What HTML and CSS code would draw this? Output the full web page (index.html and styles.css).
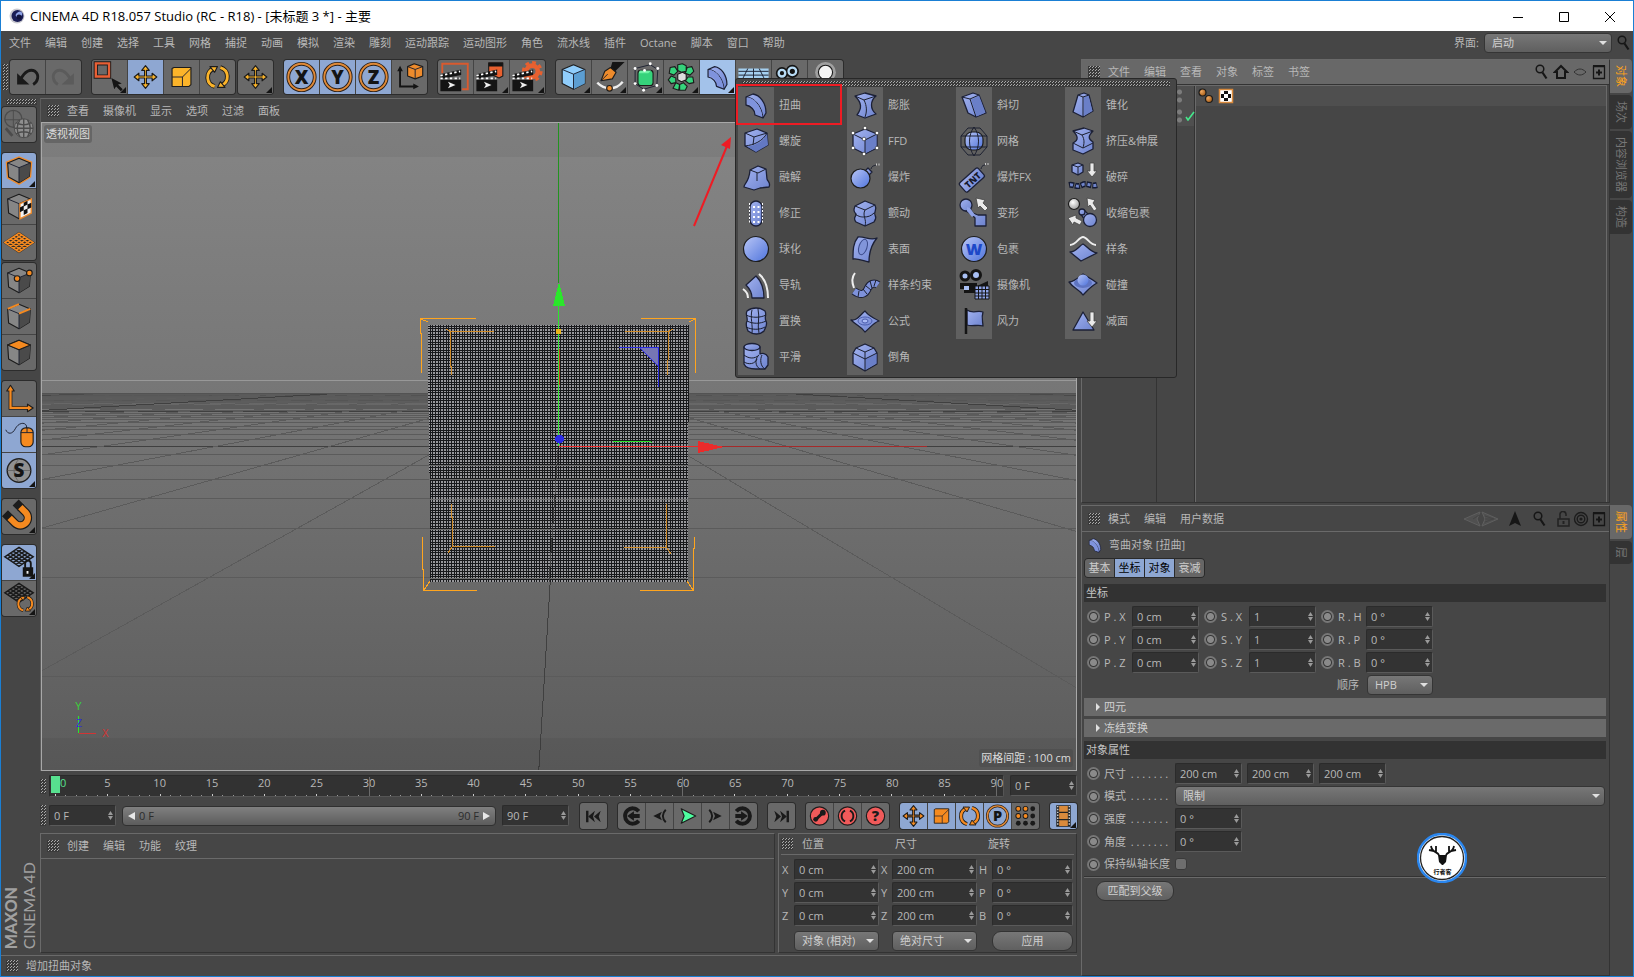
FILE: index.html
```html
<!DOCTYPE html>
<html lang="zh-CN">
<head>
<meta charset="utf-8">
<title>CINEMA 4D R18.057 Studio</title>
<link rel="stylesheet" href="styles.css">
</head>
<body>
<svg class="defs" width="0" height="0" aria-hidden="true">
<defs>
<linearGradient id="gb" x1="0" y1="0" x2="1" y2="1"><stop offset="0" stop-color="#a3b3f0"/><stop offset="1" stop-color="#6d83cf"/></linearGradient>
<linearGradient id="gs" x1="0" y1="0" x2="1" y2="1"><stop offset="0" stop-color="#b9c6f6"/><stop offset="1" stop-color="#4f74dc"/></linearGradient>
<radialGradient id="gw" cx=".4" cy=".35" r=".7"><stop offset="0" stop-color="#fff"/><stop offset="1" stop-color="#999"/></radialGradient>
<radialGradient id="gc" cx=".35" cy=".35" r=".7"><stop offset="0" stop-color="#f0a860"/><stop offset="1" stop-color="#a35a14"/></radialGradient>
</defs>
<symbol id="cube" viewBox="0 0 36 36"><path class="k" fill="#868686" d="M18 5 30 10 29 24 18 31 7 25 6 10Z"/><path fill="#4a4a4a" d="M18 15 30 10 29 24 18 31Z"/><path class="n" d="M6 10 18 15 30 10M18 15V31"/></symbol>
<symbol id="move" viewBox="0 0 36 36"><path class="k" fill="currentColor" d="M18 6l4 5h-3v6h6v-3l5 4-5 4v-3h-6v6h3l-4 5-4-5h3v-6h-6v3l-5-4 5-4v3h6v-6h-3Z"/></symbol>
<symbol id="scale" viewBox="0 0 36 36"><path class="k" fill="currentColor" d="M8 9l2-1h18v18l-2 2H8Z"/><path class="n" d="M8 18h11v10M19 18l9-9"/></symbol>
<symbol id="rot" viewBox="0 0 36 36"><g fill="none"><path stroke="#1c1c1c" stroke-width="5" d="M15 28A10 10 0 0 1 14 9M21 8a10 10 0 0 1 1 19"/><path stroke="currentColor" stroke-width="3" d="M15 28A10 10 0 0 1 14 9M21 8a10 10 0 0 1 1 19"/></g><path class="k" fill="currentColor" d="M10 7h8l-3 6ZM26 29h-8l3-6Z"/></symbol>
<symbol id="undo" viewBox="0 0 36 36"><path fill="none" stroke="currentColor" stroke-width="3" d="M11 20C15 12 21 9 26 12c5 4 3 11-2 14"/><path fill="currentColor" d="M7 14v12h13Z"/></symbol>
<symbol id="axis" viewBox="0 0 36 36"><path fill="none" stroke="#1c1c1c" stroke-width="4" d="M9 9v19h19"/><path class="k" fill="currentColor" d="M9 4l4 6H5ZM33 28l-6 4v-8Z"/><path fill="none" stroke="currentColor" stroke-width="2.400" d="M9 8v20h20"/></symbol>
<symbol id="clap" viewBox="0 0 36 36"><path fill="#141414" d="M2 21h22v12H2ZM2 15l22-5v6L2 20Z"/><path stroke="#fff" stroke-width="2" stroke-dasharray="2.500 2.500" fill="none" d="M2 16.500 23 12M2 19.500h21"/><path fill="#eee" d="M10 23l8 3.500-8 3.500 2-3.500Z"/></symbol>
<symbol id="film" viewBox="0 0 36 36"><path fill="#222" d="M8 3h20v30H8Z"/><path fill="#d98a3c" d="M12 4h12v8H12ZM12 14h12v8H12ZM12 24h12v8H12Z"/><path stroke="#ccc" stroke-width="2" stroke-dasharray="2 2" d="M10 4v28M26 4v28"/></symbol>
<symbol id="meshp" viewBox="0 0 36 36"><path fill="none" stroke="currentColor" stroke-width="1.600" d="M3 18 18 8 33 18 18 28ZM6 16l15 10M9 14l15 10M12 12l15 10M15 10l15 10M6 20 21 10M9 22l15-10M12 24l15-10M15 26l15-10"/></symbol>
<symbol id="zoomi" viewBox="0 0 16 16"><circle cx="6" cy="5" r="3.800" fill="none" stroke="#161616" stroke-width="1.500"/><path stroke="#161616" stroke-width="2.200" d="M8.500 8.500l4 6"/></symbol>
<symbol id="plusw" viewBox="0 0 16 16"><path fill="none" stroke="#161616" stroke-width="1.300" d="M2.500 2.500h11v12h-11Z"/><path stroke="#161616" stroke-width="2" d="M2 2h12M8 5.500v6M5 8.500h6"/></symbol>

<symbol id="p-bend" viewBox="0 0 36 36"><path class="b" d="M8 10 15 7c7 1 13 9 13 19l-3 5-8-3c0-5-4-9-9-10Z"/><path class="n" d="M8 10c8 0 16 9 17 21"/><path fill="#7f93dd" d="M9 10.500c7 0 14 8 15.500 19l-6.500-2.500c0-5-4-9-9-10Z"/></symbol>
<symbol id="p-twist" viewBox="0 0 36 36"><path class="b" d="M7 10 19 6l10 4 1 12-12 7L7 23Z"/><path fill="#6378c2" d="M29 10c-2 8-12 13-20 13.500L18 29l12-7Z"/><path class="n" d="M7 10l9 4 13-4M16 14l-1 8M7 23c9-1 18-5 22-13"/></symbol>
<symbol id="p-melt" viewBox="0 0 36 36"><path class="b" d="M12 11l8-4 8 3 1 10c1 3 4 4 2 8l-9 1-6 2-10-3c0-4 5-4 6-17Z"/><path class="n" d="M12 11l8 3 8-4M19 14v8"/></symbol>
<symbol id="p-corr" viewBox="0 0 36 36"><rect class="b" x="12" y="6" width="12" height="25" rx="6"/><path fill="none" stroke="#fff" stroke-dasharray="2 1.500" d="M11.500 8v21M24.500 8v21"/><path stroke="#fff" stroke-width="2" stroke-dasharray="2 3" d="M16 11v18M20.500 11v18"/></symbol>
<symbol id="p-sphere" viewBox="0 0 36 36"><circle class="k" fill="url(#gs)" cx="18" cy="18" r="12.500"/></symbol>
<symbol id="p-rail" viewBox="0 0 36 36"><path class="b" d="M8 18 18 9c5 5 8 12 8 22H14c0-5-3-10-6-13Z"/><path class="w" d="M21 7c6 5 9 13 9 24M5 22c3 2 5 5 5 9"/></symbol>
<symbol id="p-disp" viewBox="0 0 36 36"><path class="b" d="M9 8c5-4 13-4 18 0 2 4-1 6 1 10 2 4-1 7-2 10-4 4-11 4-16 0-1-3-3-6-1-10 1-4-2-6 0-10Z"/><path class="n" d="M8 12c6 3 14 3 20 0M9 18c6 3 13 3 19 0M8 24c6 3 14 3 19 0M14 7c-2 8 1 15 0 23M20 6c2 8-1 16 1 24"/></symbol>
<symbol id="p-smooth" viewBox="0 0 36 36"><path class="b" d="M6 8v17c2 5 8 5 12 5h9l3-4V18c-2-4-6-4-8-3V8Z"/><ellipse class="b" cx="14" cy="8" rx="8" ry="3.500"/><path class="n" d="M6 16c5 4 11 4 15 0M6 23c5 3 11 2 13-3M20 17c-3 4-3 10 2 13M24 16c-2 4-2 11 3 14"/></symbol>
<symbol id="p-bulge" viewBox="0 0 36 36"><path class="b" d="M8 9l10-3 11 3c-6 5-6 13 0 18l-11 4-8-3c5-7 5-12-2-19Z"/><path class="n" d="M8 9l9 4 12-4M17 13c3 6 3 12 1 17"/></symbol>
<symbol id="p-ffd" viewBox="0 0 36 36"><path class="b" d="M18 6l12 5v14l-12 6-12-6V11Z"/><path fill="#6a7fc8" d="M18 17l11.500-5.500v13L18 30.500Z"/><path class="n" d="M6 11l12 6 12-6M18 17v14"/><g fill="#fff" stroke="#222" stroke-width=".6"><circle cx="18" cy="5" r="1.800"/><circle cx="6" cy="10" r="1.800"/><circle cx="30" cy="10" r="1.800"/><circle cx="17" cy="16" r="1.800"/><circle cx="6" cy="25" r="1.800"/><circle cx="30" cy="25" r="1.800"/><circle cx="17" cy="31" r="1.800"/></g></symbol>
<symbol id="p-bomb" viewBox="0 0 36 36"><path class="b" d="M18 12l3-3 4 4-3 3Z"/><circle class="k" fill="url(#gs)" cx="13.500" cy="19.500" r="9.500"/><path class="n" stroke-width="2.500" d="M24 10c1-4 4-3 5-4"/><path stroke="#ccc" stroke-width="2" stroke-dasharray="1 1.500" d="M29 5.500h4"/></symbol>
<symbol id="p-jig" viewBox="0 0 36 36"><path class="b" d="M8 11l10-5 10 4c3 6-2 7 0 10 2 3 0 5-1 7l-9 4-9-4c-4-5 1-6 0-8-3-3-2-5-1-8Z"/><path class="n" d="M8 11l10 4 10-5M18 15c-3 6 2 9 0 16M8 19c4 3 7 3 9 3 4 0 7-1 10-4"/></symbol>
<symbol id="p-surf" viewBox="0 0 36 36"><path class="b" d="M11 6c6-1 12 4 19 1-5 6-8 13-8 24-6-1-11-4-16-3 0-9 0-16 5-22Z"/><ellipse cx="16" cy="16" rx="4" ry="8" transform="rotate(18 16 16)" fill="#8195da" stroke="#3a4a8a"/></symbol>
<symbol id="p-spw" viewBox="0 0 36 36"><path fill="none" stroke="#1c2036" stroke-width="8" d="M7 24c8 6 12 2 14-3 2-4 6-6 10-3"/><path fill="none" stroke="#7e92db" stroke-width="6" d="M7 24c8 6 12 2 14-3 2-4 6-6 10-3"/><path class="n" d="M12 24l-1 6M16 22l4 5M19 19l5 4M23 14l2 7M29 13l-2 6"/><path class="w" d="M8 6c-4 5-3 10-1 15"/></symbol>
<symbol id="p-formula" viewBox="0 0 36 36"><path class="b" d="M4 17c6 1 8-4 14-9 4 6 8 6 14 10-6 2-8 6-14 11-4-6-8-6-14-12Z"/><ellipse cx="18" cy="18" rx="7" ry="4" fill="none" stroke="#4a5cae"/><ellipse cx="18" cy="18" rx="3" ry="2" fill="#a9b9f4" stroke="#4a5cae"/></symbol>
<symbol id="p-bevel" viewBox="0 0 36 36"><path class="b" d="M18 5l9 4 3 5v11l-12 7-12-7V14l3-5Z"/><path fill="#6a7fc8" d="M18 20l11.500-5.500v10L18 31Z"/><path class="n" d="M9 9l9 4 9-4M6 14l12 6 12-6M18 13v19"/></symbol>
<symbol id="p-shear" viewBox="0 0 36 36"><path class="b" d="M6 10l11-4 6 2 7 18-10 4-8-4Z"/><path fill="#6a7fc8" d="M15 12.500l8-4 6.500 17-9 4Z"/><path class="n" d="M6 10l8 2 9-4M14 12l6 18"/></symbol>
<symbol id="p-mesh" viewBox="0 0 36 36"><rect class="k" fill="url(#gs)" x="9" y="9" width="18" height="18" rx="7"/><path class="n" d="M12 5h12l7 8v11l-7 8H12l-7-8V13ZM5 13h26M5 24h26M18 4c-6 8-6 20 0 29M18 4c6 8 6 20 0 29"/></symbol>
<symbol id="p-morph" viewBox="0 0 36 36"><path class="b" d="M12 10l5 8 5 2h8v11H19v-8l-4-4-7-4Z"/><circle class="b" cx="10" cy="10" r="6"/><path fill="#8fa2e6" d="M11 12l3 1 5 7-3 2-5-6Z"/><path class="a" d="M20 3l9 2-2 3 5 5-3 3-5-5-2 2Z"/></symbol>
<symbol id="p-cam" viewBox="0 0 36 36"><path fill="#141414" d="M4 16h17v10H8v-4H4ZM21 19l11-5v9Z"/><g fill="#a9c0f4" stroke="#141414" stroke-width="3"><circle cx="9" cy="9" r="4"/><circle cx="20" cy="8" r="4.500"/></g><path fill="#a9c0f4" d="M8 19h5v4H8Z"/><path fill="#8ea3e6" stroke="#141414" d="M19 19h14v13H19ZM22.500 19v13M26 19v13M29.500 19v13M19 22.500h14M19 26h14M19 29h14"/></symbol>
<symbol id="p-wind" viewBox="0 0 36 36"><path class="b" d="M11 7c6 4 10 0 16 2-2 6 0 10 0 14-6-2-10 1-16-1Z"/><path stroke="#141414" stroke-width="2.500" d="M10 5v26"/></symbol>
<symbol id="p-taper" viewBox="0 0 36 36"><path class="b" d="M13 8l6-2 5 2 4 16-10 6-10-5Z"/><path fill="#6a7fc8" d="M18.500 10.500l5-2 4 15.500-8.500 5Z"/><path class="n" d="M13 8l5 2 6-2M18 10v20"/></symbol>
<symbol id="p-squash" viewBox="0 0 36 36"><path class="b" d="M8 8l11-3 9 3c-5 5-5 8 0 11v7l-10 5-10-4v-7c6-3 5-7 0-12Z"/><path class="n" d="M8 8l9 4 11-4M17 12c3 5 2 9 1 13M8 20l10 5 10-5"/></symbol>
<symbol id="p-shat" viewBox="0 0 36 36"><path class="b" d="M13 4l5 2v7l-5 3-6-3V6Z"/><path class="n" d="M7 6l6 2 5-2M13 8v8"/><path class="a" d="M25 4h4v8h3l-5 6-5-6h3Z"/><path fill="none" stroke="#151b33" stroke-width="6" stroke-dasharray="5 1" d="M4 26c5-1 8 3 13 0s8 2 15 0"/><path fill="none" stroke="#7085ca" stroke-width="3" stroke-dasharray="3 3" stroke-dashoffset="-1" d="M4 26c5-1 8 3 13 0s8 2 15 0"/></symbol>
<symbol id="p-shrink" viewBox="0 0 36 36"><circle class="k" fill="url(#gw)" cx="9" cy="9" r="5.500"/><path class="b" d="M15 18l4-3 5 5-4 5Z"/><circle class="b" cx="17" cy="17" r="3"/><circle class="b" cx="25" cy="25" r="6.500"/><path class="a" d="M22 3l8 2-2 3 4 6-3 2-4-6-2 2ZM3 23l8-3v3l6 3-2 4-6-3-1 3Z"/></symbol>
<symbol id="p-spline" viewBox="0 0 36 36"><path class="b" d="M5 21c6 0 9-6 13-8 4 2 7 8 14 9l-16 8Z"/><path class="w" d="M5 14c6 0 9-8 13-8s7 8 13 8"/></symbol>
<symbol id="p-coll" viewBox="0 0 36 36"><path class="b" d="M4 15c5 0 9-4 14-8 4 3 8 4 14 9-6 3-9 7-14 12-4-6-9-6-14-13Z"/><ellipse cx="18" cy="16" rx="9" ry="5" fill="#5e74c2"/><circle cx="18" cy="13" r="5.500" fill="url(#gs)"/></symbol>
<symbol id="p-poly" viewBox="0 0 36 36"><path class="b" d="M18 9l11 18H8Z"/><path class="a" d="M25 9h4v9h3l-5 6-5-6h3Z"/></symbol>
</svg>

<div class="window">
<header class="titlebar">
  <svg class="logo" viewBox="0 0 16 16"><circle cx="8" cy="8" r="7.500" fill="#c9c9d0"/><circle cx="8.500" cy="8" r="6" fill="#1a1d55"/><ellipse cx="10" cy="6.500" rx="3.500" ry="2.500" transform="rotate(-35 10 6.500)" fill="#8fa3e6"/><circle cx="10" cy="9" r="2.500" fill="#12143c"/></svg>
  <h1>CINEMA 4D R18.057 Studio (RC - R18) - [未标题 3 *] - 主要</h1>
  <div class="winbtns">
    <button aria-label="最小化"><svg viewBox="0 0 12 12"><path d="M1 6.500h10"/></svg></button>
    <button aria-label="最大化"><svg viewBox="0 0 12 12"><path d="M1.500 1.500h9v9h-9Z"/></svg></button>
    <button aria-label="关闭"><svg viewBox="0 0 12 12"><path d="M1 1l10 10M11 1L1 11"/></svg></button>
  </div>
</header>
<nav class="menubar">
  <div class="menu"><a href="#">文件</a><a href="#">编辑</a><a href="#">创建</a><a href="#">选择</a><a href="#">工具</a><a href="#">网格</a><a href="#">捕捉</a><a href="#">动画</a><a href="#">模拟</a><a href="#">渲染</a><a href="#">雕刻</a><a href="#">运动跟踪</a><a href="#">运动图形</a><a href="#">角色</a><a href="#">流水线</a><a href="#">插件</a><a href="#">Octane</a><a href="#">脚本</a><a href="#">窗口</a><a href="#">帮助</a></div>
  <label for="layout">界面:</label>
  <select id="layout" class="drop layout"><option>启动</option></select>
  <svg class="i16"><use href="#zoomi"/></svg>
</nav>

<div class="workspace">
<main class="left">
  <div class="toolbar">
    <span class="grip tall"></span>
    <div class="group"><button aria-label="撤销"><svg class="dk"><use href="#undo"/></svg></button><button aria-label="重做"><svg class="ghost"><use href="#undo"/></svg></button></div>
    <div class="group wide"><button class="more" aria-label="选择"><svg viewBox="0 0 36 36"><path fill="none" stroke="#1c1c1c" stroke-width="4.500" d="M3.500 3.500h14v14h-14Z"/><path fill="none" stroke="#e85f35" stroke-width="2.500" d="M3.500 3.500h14v14h-14Z"/><path fill="#141414" d="M20 19l11 6-4 1 5 5-2 2-5-5-2 3Z"/></svg></button><button class="on y" aria-label="移动"><svg><use href="#move"/></svg></button><button class="y" aria-label="缩放"><svg><use href="#scale"/></svg></button><button class="y" aria-label="旋转"><svg><use href="#rot"/></svg></button></div>
    <div class="group near"><button class="y more" aria-label="最近工具"><svg><use href="#move"/></svg></button></div>
    <div class="group"><button class="on" aria-label="X轴"><svg viewBox="0 0 36 36"><circle class="ring1" cx="18" cy="18" r="14"/><circle class="ring2" cx="18" cy="18" r="14"/><text x="18" y="25" class="ax">X</text></svg></button><button class="on" aria-label="Y轴"><svg viewBox="0 0 36 36"><circle class="ring1" cx="18" cy="18" r="14"/><circle class="ring2" cx="18" cy="18" r="14"/><text x="18" y="25" class="ax">Y</text></svg></button><button class="on" aria-label="Z轴"><svg viewBox="0 0 36 36"><circle class="ring1" cx="18" cy="18" r="14"/><circle class="ring2" cx="18" cy="18" r="14"/><text x="18" y="25" class="ax">Z</text></svg></button><button aria-label="坐标系统"><svg viewBox="0 0 36 36"><path fill="none" stroke="#141414" stroke-width="2" d="M8 10v18h16"/><path fill="#141414" d="M8 6l3 6H5ZM28 28l-6 3v-6Z"/><path class="k" fill="#ee8b2c" d="M23 4l9 3v10l-8 3-8-3V7Z"/><path class="n" d="M16 7l8 3 8-3M24 10v10"/></svg></button></div>
    <div class="group"><button aria-label="渲染活动视图"><svg viewBox="0 0 36 36"><path fill="none" stroke="#d95a2e" stroke-width="2" d="M4 14V4h27v27h-6"/><use href="#clap"/></svg></button><button class="more" aria-label="渲染到图片查看器"><svg viewBox="0 0 36 36"><path class="k" fill="#e8602f" d="M15 3h15v14l-4 2-11-5Z"/><path fill="#141414" d="M15 3h15v4H15Z"/><use href="#clap"/></svg></button><button class="more" aria-label="编辑渲染设置"><svg viewBox="0 0 36 36"><circle cx="23" cy="12" r="6" fill="none" stroke="#e8602f" stroke-width="5"/><circle cx="23" cy="12" r="9.500" fill="none" stroke="#e8602f" stroke-width="3" stroke-dasharray="4 3.400"/><use href="#clap"/></svg></button></div>
    <div class="group"><button class="more" aria-label="立方体"><svg viewBox="0 0 36 36"><path class="k" fill="#90cdfb" d="M18 5l12 5v15l-12 6-12-6V10Z"/><path fill="#5c9ed2" d="M18 15l12-5v15l-12 6Z"/><path class="n" d="M6 10l12 5 12-5M18 15v16"/></svg></button><button class="more" aria-label="画笔"><svg viewBox="0 0 36 36"><path class="n" stroke-width="4" d="M5 24c8 8 20 8 27-1"/><path stroke="#eee" fill="none" stroke-width="2.400" d="M5 24c8 8 20 8 27-1"/><path fill="#141414" d="M21 2h13L24 12l-5-3Z"/><path class="k" fill="#ee8b2c" d="M19 8l6 5-4 7-12 2 4-10Z"/><path class="n" d="M9 22l7-7"/><circle class="k" fill="#ee8b2c" cx="18" cy="30" r="3"/></svg></button><button class="more" aria-label="细分曲面"><svg viewBox="0 0 36 36"><path class="n" d="M7 9l16-4 8 5-1 17-14 4-9-6Z"/><rect class="k" fill="#35d37b" x="10" y="11" width="16" height="16" rx="3"/><path fill="#72f3a6" d="M12 11h12l-3 3H11Z"/><g fill="#fff"><circle cx="7" cy="9" r="1.500"/><circle cx="23" cy="4" r="1.500"/><circle cx="31" cy="9" r="1.500"/><circle cx="30" cy="27" r="1.500"/><circle cx="16" cy="32" r="1.500"/><circle cx="7" cy="25" r="1.500"/><circle cx="17" cy="11" r="1.500"/></g></svg></button><button class="more" aria-label="阵列"><svg viewBox="0 0 36 36"><g class="k" fill="#35d37b"><path d="M14 5l5-1 4 2v6l-5 1-4-2ZM24 8l5-1 2 5-4 4-5-2ZM25 18l5 0 1 6-5 1-4-3ZM20 24l4 4-2 4h-6v-6ZM6 8l5-1 3 5-4 4-5-2ZM7 17l5 2v5l-5 1-3-4ZM12 24l4 2-1 6-6-2Z"/></g><path class="k" fill="#ddd" d="M14 15l5-2 4 2v6l-5 2-4-2Z"/></svg></button><button class="hot more" aria-label="变形器"><svg><use href="#p-bend"/></svg></button><button class="more" aria-label="地面"><svg viewBox="0 0 36 36"><path fill="#a5d0f0" d="M2 9h32v11H2Z"/><path class="n" d="M2 12h32M2 16h32M12 9l-5 10M18 9v10M24 9l5 10"/></svg></button><button class="more" aria-label="摄像机"><svg viewBox="0 0 36 36"><g fill="#141414" stroke="#141414" stroke-width="5"><circle cx="10" cy="14" r="4"/><circle cx="21" cy="12" r="4.500"/></g><g fill="#141414" stroke="#b8dcf6" stroke-width="2.500"><circle cx="10" cy="14" r="3.500"/><circle cx="21" cy="12" r="4"/></g></svg></button><button class="more" aria-label="灯光"><svg viewBox="0 0 36 36"><circle cx="18" cy="13" r="11" fill="#a0a0a0"/><circle class="k" cx="18" cy="13" r="7.500" fill="#f4f4f4"/></svg></button></div>
  </div>

  <div class="middle">
    <aside class="side">
      <span class="grip flat"></span>
      <div class="group"><button aria-label="转为可编辑"><svg viewBox="0 0 36 36"><circle cx="12" cy="12" r="9" fill="none" stroke="#4c4c4c" stroke-width="1.500"/><path stroke="#4c4c4c" fill="none" d="M3 13h18M12 3v18"/><path stroke="#4c4c4c" stroke-width="3" fill="none" d="M4 22l7 8"/><circle cx="23" cy="22" r="10" fill="#8e8e8e" stroke="#4c4c4c"/><path stroke="#4c4c4c" stroke-width="1.500" fill="none" d="M13 22h20M15 16c5 3 11 3 16 0M15 28c5-3 11-3 16 0M23 12v20M19 13c-4 6-4 12 0 18M27 13c4 6 4 12 0 18"/></svg></button></div>
      <div class="group"><button class="on more" aria-label="模型"><svg viewBox="0 0 36 36"><path fill="none" stroke="#ee8b2c" stroke-width="4" d="M18 5 30 10 29 24 18 31 7 25 6 10Z"/><use href="#cube"/></svg></button><button aria-label="纹理"><svg viewBox="0 0 36 36"><use href="#cube"/><path fill="#f2f2f2" stroke="#ee8b2c" stroke-width="1.500" d="M19 15l12-5v15l-12 6Z"/><path fill="#111" d="M19 19l4-2v5l-4 2ZM23 14l4-2v4l-4 2ZM27 16l4-2v5l-4 2ZM23 22l4-2v5l-4 2Z"/></svg></button><button class="o" aria-label="工作平面"><svg viewBox="0 0 36 36"><path fill="#2a2a2a" d="M1 18 18 6.500 35 18 18 29.500Z"/><use href="#meshp"/></svg></button></div>
      <div class="group tight"><button aria-label="点"><svg viewBox="0 0 36 36"><use href="#cube"/><circle class="k" fill="#f58a20" cx="16" cy="16" r="3"/><circle class="k" fill="#f58a20" cx="29" cy="10" r="3"/></svg></button><button aria-label="边"><svg viewBox="0 0 36 36"><use href="#cube"/><path stroke="#f58a20" stroke-width="2" d="M6 10l12-5M18 15l12-5"/></svg></button><button aria-label="多边形"><svg viewBox="0 0 36 36"><use href="#cube"/><path class="k" fill="#f58a20" d="M18 5l12 5-12 5-12-5Z"/></svg></button></div>
      <div class="group"><button class="o" aria-label="轴心"><svg><use href="#axis"/></svg></button><button class="on" aria-label="微调"><svg viewBox="0 0 36 36"><path class="n" stroke-width="1.800" d="M4 13c2 5 7 5 10-1s10-8 12-3v3"/><rect class="k" fill="#f58a20" x="20" y="11" width="13" height="20" rx="5"/><path class="n" stroke-width="1.500" d="M20 16h13M26.500 11v5"/></svg></button><button class="on more" aria-label="独显"><svg viewBox="0 0 36 36"><circle cx="18" cy="18" r="12.500" fill="#909090" stroke="#222" stroke-width="1.500"/><path fill="none" stroke="#666" d="M6 18h24M18 6c-7 7-7 17 0 24"/><text x="18" y="25" class="ax">S</text></svg></button></div>
      <div class="group"><button class="more" aria-label="捕捉"><svg viewBox="0 0 36 36"><g transform="rotate(-45 18 18)" fill="none"><path stroke="#1c1c1c" stroke-width="9" d="M10 12v8a8 8 0 0 0 16 0v-8"/><path stroke="#1c1c1c" stroke-width="9" d="M10 5v8M26 5v8"/><path stroke="#f58a20" stroke-width="6.500" d="M10 12v8a8 8 0 0 0 16 0v-8"/></g></svg></button></div>
      <div class="group"><button class="on more dkb" aria-label="锁定工作平面"><svg viewBox="0 0 36 36"><g transform="translate(0 -6)"><use href="#meshp"/></g><path fill="#141414" d="M22 23h11v10H22Z"/><path fill="none" stroke="#141414" stroke-width="2" d="M24.500 24v-5a3 3 0 0 1 6 0v5"/><path fill="#eee" d="M26 27h2v3h-2Z"/></svg></button><button class="more dkb" aria-label="工作平面模式"><svg viewBox="0 0 36 36"><g transform="translate(0 -6)"><use href="#meshp"/></g><g class="y o" transform="translate(12 11) scale(.7)"><use href="#rot" width="36" height="36"/></g></svg></button></div>
      <div class="brand"><b>MAXON</b><span>CINEMA 4D</span></div>
    </aside>

    <section class="center">
      <div class="viewpanel">
        <div class="panelmenu"><span class="grip sq"></span><a href="#">查看</a><a href="#">摄像机</a><a href="#">显示</a><a href="#">选项</a><a href="#">过滤</a><a href="#">面板</a></div>
        <div class="viewport">
          <svg class="scene" viewBox="42 123 1034 647" preserveAspectRatio="xMidYMid slice" shape-rendering="crispEdges">
            <defs>
              <linearGradient id="sky" x1="0" y1="0" x2="0" y2="1"><stop offset="0" stop-color="#858585"/><stop offset="1" stop-color="#777"/></linearGradient>
              <linearGradient id="gnd" x1="0" y1="0" x2="0" y2="1"><stop offset="0" stop-color="#777"/><stop offset="1" stop-color="#5c5c5c"/></linearGradient>
              <pattern id="mesh" width="8" height="8" patternUnits="userSpaceOnUse"><path fill="#18191b" d="M0 0h8v8H0Z"/><path fill="#98989c" d="M1 1h2v2H1ZM4 1h2v2H4ZM7 1h1v2H7ZM1 4h2v2H1ZM4 4h2v2H4ZM7 4h1v2H7ZM1 7h2v1H1ZM4 7h2v1H4ZM7 7h1v1H7Z"/></pattern>
            </defs>
            <path fill="url(#sky)" d="M42 123h1034v258H42Z"/>
            <path fill="url(#gnd)" d="M42 381h1034v389H42Z"/>
            <path stroke="#989898" d="M42 380.500h1034"/>
            <path fill="#535353" d="M42 393h1034v4H42Z"/>
            <path fill="#606060" d="M42 397h1034v6H42Z"/>
            <g id="floor"></g>
            <path fill="#000" opacity=".05" d="M42 123h1034v34H42ZM42 738h1034v32H42Z"/>
            <path fill="url(#mesh)" d="M428 325h261v65l-1 65v126l-1 1H430v-48l-1-125h-1Z"/>
            <path stroke="#6d6d6d" stroke-width="1" d="M429 465.500h259M429 479.500h259M429 499.500h259M430 529.500h258M430 578.500h257"/>
            <path stroke="#3f3f3f" d="M558 450l-9 132"/>
            <g fill="none" stroke="#cf8a26"><path d="M446 329l4.500 2.500H494M450.500 331.500V366h1v9M673 329l-4.500 2.500H625M668.500 331.500V346l-1 29"/><path d="M451.500 504v13h1v29.500H495M452 547l-4 6M666.500 504v43.500H624M667 548l4 6"/></g>
            <g fill="none" stroke="#ffa51e"><path d="M476 318.500H420.500V333h1v40M421 319l7 3M641 318.500h54.500V373M695 319l-6 3M422.500 537v32h1v21.500H477M424 590l6-9M694.500 537v11h-1v42.500H640M693 590l-6-9"/></g>
            <path stroke="#22931f" d="M558.500 123v160"/>
            <path stroke="#c93e23" d="M559.500 349v36"/>
            <path stroke="#2be62b" d="M558.500 300v146M613 441.500h37l2 1"/>
            <path fill="#2be62b" d="M559 282l6 24h-12Z"/>
            <path fill="#e8b31c" d="M556 329h5v5h-5Z"/>
            <path fill="#7676b4" d="M639 347h19v20Z"/><path fill="none" stroke="#2929e0" d="M619 347.500h39.500V387M640 348l18 18"/>
            <path stroke="#a52a2a" d="M720 446.500h207"/><path stroke="#ee2828" d="M559 446.500h140"/>
            <path fill="#ea2b2b" d="M698 441v12l26-6Z"/>
            <circle cx="559.500" cy="439" r="4.500" fill="#2a2ae4"/>
            <path stroke="#2be62b" d="M78.500 716v17"/><path stroke="#d23434" d="M79 733.500h17"/>
            <text class="gz gzy" x="75" y="710">Y</text><text class="gz gzz" x="76" y="727">Z</text><text class="gz gzx" x="102" y="737">X</text>
          </svg>
          <span class="tag view-name">透视视图</span>
          <span class="tag view-grid">网格间距 : 100 cm</span>
        </div>
      </div>

      <div class="timeline">
        <span class="grip tall"></span>
        <div class="ruler">
          <div class="marks"><span class="first">0</span><span>5</span><span>10</span><span>15</span><span>20</span><span>25</span><span>30</span><span>35</span><span>40</span><span>45</span><span>50</span><span>55</span><span>60</span><span>65</span><span>70</span><span>75</span><span>80</span><span>85</span><span>90</span></div>
          <div class="ticks" id="ticks"></div>
          <span class="playhead"></span>
        </div>
        <input class="num frame" aria-label="当前帧" value="0 F">
      </div>

      <div class="transport">
        <span class="grip tall"></span>
        <input class="num frame" aria-label="起始帧" value="0 F">
        <div class="range"><span><i class="tri l"></i>0 F</span><span>90 F<i class="tri r"></i></span></div>
        <input class="num frame" aria-label="结束帧" value="90 F">
        <div class="playbtns">
        <div class="group s"><button aria-label="转到开始"><svg viewBox="0 0 27 27"><path fill="none" stroke="#1a1a1a" stroke-width="2.500" d="M7 8v12"/><path fill="#1a1a1a" d="M8 14l7-6-2 6 2 6ZM14 14l7-6-2 6 2 6Z"/></svg></button></div>
        <div class="group s"><button aria-label="上一关键帧"><svg viewBox="0 0 27 27"><path fill="none" stroke="#1a1a1a" stroke-width="4" d="M21 8.500a8 8 0 1 0 0 10"/><path fill="#1a1a1a" d="M9 13.500l7-5v3h6v4h-6v3Z"/></svg></button><button aria-label="上一帧"><svg viewBox="0 0 27 27"><path fill="#1a1a1a" d="M7 13.500l9-4.500-2 4.500 2 4.500Z"/><path fill="none" stroke="#1a1a1a" stroke-width="2" d="M20 7c-4 4-4 9 0 13"/></svg></button><button aria-label="播放"><svg viewBox="0 0 27 27"><path class="k" fill="#4dffa0" d="M7 6l15 7.500L7 21l3-7.500Z"/></svg></button><button aria-label="下一帧"><svg viewBox="0 0 27 27"><path fill="#1a1a1a" d="M20 13.500l-9-4.500 2 4.500-2 4.500Z"/><path fill="none" stroke="#1a1a1a" stroke-width="2" d="M7 7c4 4 4 9 0 13"/></svg></button><button aria-label="下一关键帧"><svg viewBox="0 0 27 27"><path fill="none" stroke="#1a1a1a" stroke-width="4" d="M6 8.500a8 8 0 1 1 0 10"/><path fill="#1a1a1a" d="M18 13.500l-7-5v3H5v4h6v3Z"/></svg></button></div>
        <div class="group s"><button aria-label="转到结束"><svg viewBox="0 0 27 27"><path fill="none" stroke="#1a1a1a" stroke-width="2.500" d="M20 8v12"/><path fill="#1a1a1a" d="M19 14l-7-6 2 6-2 6ZM13 14L6 8l2 6-2 6Z"/></svg></button></div>
        <div class="group s"><button aria-label="记录活动对象"><svg viewBox="0 0 27 27"><circle class="k" fill="#f05a5a" cx="13.500" cy="13.500" r="9.500"/><path stroke="#1a1a1a" stroke-width="3" d="M9 18l8-8"/><circle cx="17" cy="10" r="3" fill="#1a1a1a"/><circle cx="9.500" cy="17" r="2.500" fill="#1a1a1a"/></svg></button><button aria-label="自动关键帧"><svg viewBox="0 0 27 27"><circle class="k" fill="#f05a5a" cx="13.500" cy="13.500" r="9.500"/><path fill="none" stroke="#1a1a1a" stroke-width="2" d="M11 8a6 6 0 0 0 0 11M16 8a6 6 0 0 1 0 11"/></svg></button><button aria-label="关键帧选集"><svg viewBox="0 0 27 27"><circle class="k" fill="#f05a5a" cx="13.500" cy="13.500" r="9.500"/><text x="13.500" y="19" class="q">?</text></svg></button></div>
        <div class="group s"><button class="on o" aria-label="位置"><svg viewBox="3 3 30 30"><use href="#move" width="36" height="36"/></svg></button><button class="on o" aria-label="缩放"><svg viewBox="0 0 36 36"><use href="#scale" width="36" height="36"/></svg></button><button class="on o" aria-label="旋转"><svg viewBox="2 2 32 32"><use href="#rot" width="36" height="36"/></svg></button><button class="on" aria-label="参数"><svg viewBox="0 0 36 36"><circle class="ring1" cx="18" cy="18" r="14"/><circle class="ring2" cx="18" cy="18" r="14"/><text x="18" y="25" class="ax">P</text></svg></button><button aria-label="点级别动画"><svg viewBox="0 0 27 27"><g fill="#1a1a1a"><circle cx="6" cy="6" r="3"/><circle cx="13.500" cy="6" r="3"/><circle cx="21" cy="6" r="2.500"/><circle cx="6" cy="13.500" r="3"/><circle cx="13.500" cy="13.500" r="3"/><circle cx="21" cy="13.500" r="2.500"/><circle cx="6" cy="21" r="2.500"/><circle cx="13.500" cy="21" r="2.500"/><circle cx="21" cy="21" r="2.500"/></g><g fill="#f58a20"><circle cx="6" cy="6" r="2"/><circle cx="13.500" cy="6" r="2"/><circle cx="6" cy="13.500" r="2"/><circle cx="13.500" cy="13.500" r="2"/></g></svg></button></div>
        <div class="group s"><button class="on more" aria-label="动画布局"><svg viewBox="0 0 36 36"><use href="#film" width="36" height="36"/></svg></button></div>
        </div>
      </div>

      <div class="lower">
        <section class="materials"><div class="panelmenu"><span class="grip sq"></span><a href="#">创建</a><a href="#">编辑</a><a href="#">功能</a><a href="#">纹理</a></div></section>
        <section class="coords">
          <div class="chead"><span class="grip sq"></span><span>位置</span><span>尺寸</span><span>旋转</span></div>
          <div class="cgrid">
            <label for="c1">X</label><input id="c1" class="num" value="0 cm"><label for="c2">X</label><input id="c2" class="num" value="200 cm"><label for="c3">H</label><input id="c3" class="num" value="0 °">
            <label for="c4">Y</label><input id="c4" class="num" value="0 cm"><label for="c5">Y</label><input id="c5" class="num" value="200 cm"><label for="c6">P</label><input id="c6" class="num" value="0 °">
            <label for="c7">Z</label><input id="c7" class="num" value="0 cm"><label for="c8">Z</label><input id="c8" class="num" value="200 cm"><label for="c9">B</label><input id="c9" class="num" value="0 °">
            <i></i><select class="drop" aria-label="坐标模式"><option>对象 (相对)</option></select><i></i><select class="drop" aria-label="尺寸模式"><option>绝对尺寸</option></select><i></i><button class="pill">应用</button>
          </div>
        </section>
      </div>
    </section>
  </div>
  <footer class="status"><span class="grip sq"></span>增加扭曲对象</footer>
</main>

<div class="right">
  <div class="dock objects">
    <section class="panel">
      <div class="panelmenu light"><span class="grip sq"></span><a href="#">文件</a><a href="#">编辑</a><a href="#">查看</a><a href="#">对象</a><a href="#">标签</a><a href="#">书签</a>
        <span class="tools"><svg class="i16"><use href="#zoomi"/></svg><svg class="i16" viewBox="0 0 16 16"><path fill="none" stroke="#161616" stroke-width="2" d="M8 2l6 6h-2v6H4V8H2Z"/></svg><svg class="i16" viewBox="0 0 16 16"><path fill="none" stroke="#333" d="M2 8c4-4 8-4 12 0-4 4-8 4-12 0Z"/></svg><svg class="i16"><use href="#plusw"/></svg></span></div>
      <div class="tree">
        <div class="names"></div>
        <div class="flags"><div class="row"><i></i></div><div class="row"><i></i><svg class="check" viewBox="0 0 10 10"><path d="M1 6l2 3 6-8" fill="none" stroke="#45e88c" stroke-width="1.600"/></svg></div></div>
        <div class="tags"><div class="row"><svg class="i16" viewBox="0 0 16 16"><circle class="k" fill="url(#gc)" cx="4.500" cy="4.500" r="3.500"/><circle class="k" fill="url(#gc)" cx="11" cy="11" r="3.500"/></svg><svg class="i16" viewBox="0 0 16 16"><path fill="#fff" stroke="#d98a3c" stroke-width="1.500" d="M1.500 1.500h13v13h-13Z"/><path fill="#111" d="M6 3h4v3H6ZM3 6h3v4H3ZM10 6h3v4h-3ZM6 10h4v3H6Z"/></svg></div></div>
      </div>
    </section>
    <nav class="tabs"><button class="cur">对象</button><button>场次</button><button>内容浏览器</button><button>构造</button></nav>
  </div>

  <div class="dock attrs">
    <section class="panel">
      <div class="panelmenu"><span class="grip sq"></span><a href="#">模式</a><a href="#">编辑</a><a href="#">用户数据</a>
        <span class="tools"><svg class="eyes" viewBox="0 0 36 16"><path fill="#505050" stroke="#5f5f5f" d="M1 8l16-7-3 7 3 7ZM35 8L19 1l3 7-3 7Z"/><path stroke="#454545" fill="none" d="M10 8l6-4M22 5l9 3M22 8h9M22 11l8-3"/></svg><svg class="i16 arrow" viewBox="0 0 16 16"><path fill="#161616" d="M8 0l6 15-6-3-6 3Z"/></svg><svg class="i16 find"><use href="#zoomi"/></svg><svg class="i16" viewBox="0 0 16 16"><path fill="none" stroke="#222" stroke-width="1.500" d="M3 8h11v7H3ZM5 8V4a3 3 0 0 1 6-1v2"/><path fill="#222" d="M7.500 10h2v3h-2Z"/></svg><svg class="i16" viewBox="0 0 16 16"><g fill="none" stroke="#1c1c1c" stroke-width="1.400"><circle cx="8" cy="8" r="6.500"/><circle cx="8" cy="8" r="3.800"/></g><circle cx="8" cy="8" r="1.600" fill="#1c1c1c"/></svg><svg class="i16"><use href="#plusw"/></svg></span></div>
      <div class="abody">
        <div class="aname"><svg viewBox="4 4 28 28"><use href="#p-bend" width="36" height="36"/></svg>弯曲对象 [扭曲]</div>
        <div class="atabs"><button>基本</button><button class="sel">坐标</button><button class="sel">对象</button><button>衰减</button></div>
        <h2>坐标</h2>
        <div class="rows">
          <div class="trow"><label><i class="key"></i>P . X<input class="num" value="0 cm"></label><label><i class="key"></i>S . X<input class="num" value="1"></label><label><i class="key"></i>R . H<input class="num" value="0 °"></label></div>
          <div class="trow"><label><i class="key"></i>P . Y<input class="num" value="0 cm"></label><label><i class="key"></i>S . Y<input class="num" value="1"></label><label><i class="key"></i>R . P<input class="num" value="0 °"></label></div>
          <div class="trow"><label><i class="key"></i>P . Z<input class="num" value="0 cm"></label><label><i class="key"></i>S . Z<input class="num" value="1"></label><label><i class="key"></i>R . B<input class="num" value="0 °"></label></div>
          <div class="order"><label for="ord">顺序</label><select id="ord" class="drop"><option>HPB</option></select></div>
        </div>
        <button class="fold"><i></i>四元</button>
        <button class="fold"><i></i>冻结变换</button>
        <h2 class="second">对象属性</h2>
        <div class="rows">
          <div class="prow"><i class="key"></i><label for="sz">尺寸 <span>. . . . . . .</span></label><input id="sz" class="num" value="200 cm"><input class="num" aria-label="尺寸 Y" value="200 cm"><input class="num" aria-label="尺寸 Z" value="200 cm"></div>
          <div class="prow"><i class="key"></i><label for="md">模式 <span>. . . . . . .</span></label><select id="md" class="drop"><option>限制</option></select></div>
          <div class="prow"><i class="key"></i><label for="st">强度 <span>. . . . . . .</span></label><input id="st" class="num" value="0 °"></div>
          <div class="prow"><i class="key"></i><label for="an">角度 <span>. . . . . . .</span></label><input id="an" class="num" value="0 °"></div>
          <div class="prow"><i class="key"></i><label for="kp">保持纵轴长度</label><input id="kp" type="checkbox"></div>
        </div>
        <hr>
        <button class="pill fit">匹配到父级</button>
      </div>
    </section>
    <nav class="tabs"><button class="cur">属性</button><button>层</button></nav>
  </div>
</div>
</div>

<div class="popup">
  <span class="grip flat"></span>
  <div class="cols">
    <ul><li><svg><use href="#p-bend"/></svg>扭曲</li><li><svg><use href="#p-twist"/></svg>螺旋</li><li><svg><use href="#p-melt"/></svg>融解</li><li><svg><use href="#p-corr"/></svg>修正</li><li><svg><use href="#p-sphere"/></svg>球化</li><li><svg><use href="#p-rail"/></svg>导轨</li><li><svg><use href="#p-disp"/></svg>置换</li><li><svg><use href="#p-smooth"/></svg>平滑</li></ul>
    <ul><li><svg><use href="#p-bulge"/></svg>膨胀</li><li><svg><use href="#p-ffd"/></svg>FFD</li><li><svg><use href="#p-bomb"/></svg>爆炸</li><li><svg><use href="#p-jig"/></svg>颤动</li><li><svg><use href="#p-surf"/></svg>表面</li><li><svg><use href="#p-spw"/></svg>样条约束</li><li><svg><use href="#p-formula"/></svg>公式</li><li><svg><use href="#p-bevel"/></svg>倒角</li></ul>
    <ul><li><svg><use href="#p-shear"/></svg>斜切</li><li><svg><use href="#p-mesh"/></svg>网格</li><li><svg viewBox="0 0 36 36"><g transform="rotate(-42 17 20)"><rect class="b" x="3" y="14" width="25" height="12" rx="2"/><text x="7" y="24" class="tnt">TNT</text></g><path class="n" stroke-width="2" d="M25 10c1-5 4-3 5-5"/><path stroke="#ccc" stroke-width="2" stroke-dasharray="1 1.500" d="M29 5h4"/></svg>爆炸FX</li><li><svg><use href="#p-morph"/></svg>变形</li><li><svg viewBox="0 0 36 36"><circle class="k" fill="url(#gs)" cx="18" cy="18" r="12.500"/><text x="18" y="24" text-anchor="middle" class="wlet">W</text></svg>包裹</li><li><svg><use href="#p-cam"/></svg>摄像机</li><li><svg><use href="#p-wind"/></svg>风力</li></ul>
    <ul><li><svg><use href="#p-taper"/></svg>锥化</li><li><svg><use href="#p-squash"/></svg>挤压&amp;伸展</li><li><svg><use href="#p-shat"/></svg>破碎</li><li><svg><use href="#p-shrink"/></svg>收缩包裹</li><li><svg><use href="#p-spline"/></svg>样条</li><li><svg><use href="#p-coll"/></svg>碰撞</li><li><svg><use href="#p-poly"/></svg>减面</li></ul>
  </div>
</div>
<span class="callout"></span>
<svg class="pointer" viewBox="0 0 44 96"><path stroke="#ee1c24" stroke-width="2" d="M4 91L37 11"/><path fill="#ee1c24" d="M41 2l-1 12-9-4Z"/></svg>
<svg class="badge" viewBox="0 0 50 50"><circle cx="25" cy="25" r="24" fill="#fff" stroke="#2a86ee" stroke-width="2.500"/><circle cx="25" cy="25" r="21.500" fill="none" stroke="#222" stroke-width="1.300"/><path fill="#111" d="M21 22h9l-1 7-3 3h-1l-3-3Z"/><path fill="none" stroke="#111" stroke-width="1.800" d="M22 22c-2-4-7-2-8-9M19 19l0-6M17 18l-5-1M29 22c2-4 7-2 8-9M32 19l0-6M34 18l5-1"/><text x="25.500" y="41" text-anchor="middle">行者客</text></svg>
</div>
<script src="script.js"></script>
</body>
</html>
```
FILE: styles.css
```css
* { box-sizing: border-box; }
html, body { height: 100%; margin: 0; }
body, button, input, select { font: 11px/16px "Open Sans", "Noto Sans CJK SC", sans-serif; color: #b8b8b8; }
a { color: inherit; text-decoration: none; white-space: nowrap; }
button { padding: 0; border: 0; background: none; }
.defs { position: absolute; }
.k { stroke: #1c1c1c; stroke-width: 1.2; stroke-linejoin: round; }
.n { fill: none; stroke: #1c2030; stroke-width: 1; }
.b { fill: url(#gb); stroke: #1c2036; stroke-width: 1.3; stroke-linejoin: round; }
.w { fill: none; stroke: #eee; stroke-width: 2; }
.a { fill: #eaeaea; stroke: #444; stroke-width: .8; }
.tnt { font: 800 9px "Open Sans", sans-serif; fill: #15182c; }
.wlet { font: 800 16px "Open Sans", sans-serif; fill: #1d48c8; }
.ax { font: 800 20px "Open Sans", sans-serif; fill: #141414; text-anchor: middle; }
.q { font: 800 15px "Open Sans", sans-serif; fill: #1a1a1a; text-anchor: middle; }
.ring1 { fill: none; stroke: #2c2018; stroke-width: 4; }
.ring2 { fill: none; stroke: #e08a38; stroke-width: 2; }
.i16 { width: 16px; height: 16px; }

.window { position: relative; display: flex; flex-direction: column; height: 100vh; min-height: 720px; background: #464646; border: 1px solid #1a7fd4; overflow: hidden; }
.titlebar { display: flex; align-items: center; height: 30px; padding-left: 8px; background: #fff; flex: none; }
.logo { width: 16px; height: 16px; margin-right: 5px; }
.titlebar h1 { margin: 0; flex: 1; font: 400 13px/16px "Open Sans", "Noto Sans CJK SC", sans-serif; color: #000; }
.winbtns { display: flex; }
.winbtns button { width: 46px; height: 30px; }
.winbtns svg { width: 12px; height: 12px; fill: none; stroke: #000; vertical-align: middle; }
.menubar { display: flex; align-items: center; height: 26px; padding: 0 1px 2px 8px; flex: none; }
.menu { display: flex; gap: 14px; flex: 1; }
.menubar label { margin-right: 5px; }
.layout { width: 128px; margin-right: 4px; }

.drop { height: 20px; padding: 0 16px 1px 7px; border: 1px solid #353535; border-radius: 4px; color: #d0d0d0; appearance: none; background: url("data:image/svg+xml,%3Csvg xmlns='http://www.w3.org/2000/svg' width='8' height='4'%3E%3Cpath fill='%23e0e0e0' d='M0 0h8L4 4z'/%3E%3C/svg%3E") no-repeat right 4px center, linear-gradient(#777, #5f5f5f); }
.num { width: 67px; min-width: 0; height: 21px; padding: 0 14px 0 4px; border: 1px solid; border-color: #2b2b2b #5a5a5a #5a5a5a #2b2b2b; border-radius: 2px; background: #333 url("data:image/svg+xml,%3Csvg xmlns='http://www.w3.org/2000/svg' width='5' height='9'%3E%3Cpath fill='%239a9a9a' d='M0 4l2.500-4L5 4zM0 5h5L2.500 9z'/%3E%3C/svg%3E") no-repeat right 2px center; }
.pill { height: 20px; border: 1px solid #333; border-radius: 9px; color: #d0d0d0; background: linear-gradient(#777, #606060); }

.grip { flex: none; background: #3a3a3a url("data:image/svg+xml,%3Csvg xmlns='http://www.w3.org/2000/svg' width='3' height='3' shape-rendering='crispEdges'%3E%3Cpath fill='%23aaa' d='M2 0h1v1H2zM1 1h1v1H1z'/%3E%3C/svg%3E"); }
.grip.sq { width: 12px; height: 12px; margin-right: 8px; }
.grip.tall { width: 6px; align-self: stretch; }
.grip.flat { height: 6px; }

.workspace { flex: 1; min-height: 0; display: grid; grid-template-columns: minmax(0, 1fr) 552px; gap: 4px; }
.left { display: flex; flex-direction: column; min-height: 0; }
.toolbar { display: flex; padding: 3px 0 4px 1px; }
.toolbar .grip { margin: 4px 2px 4px 0; }
.group { display: flex; gap: 1px; background: #444; border-radius: 3px; box-shadow: 0 0 0 1px #2c2c2c; overflow: hidden; flex: none; }
.toolbar .group { margin-right: 11px; }
.toolbar .group.wide { margin-right: 3px; }
.group button { position: relative; display: block; width: 35px; height: 35px; background: #696969; }
.toolbar .group button { height: 34px; }
.group button > svg { display: block; width: 100%; height: 100%; }
.group .on { background: #8ea7d2; }
.group .hot { background: #a3c2ea; }
.more::after { content: ""; position: absolute; right: 1px; bottom: 1px; border: 3px solid; border-color: transparent #141414 #141414 transparent; }
.y { color: #fbb42a; }
.o { color: #f58a20; }
.dk, .dkb { color: #1a1a1a; }
.ghost { color: #5b5b5b; transform: scaleX(-1); }

.middle { flex: 1; min-height: 0; display: flex; }
.side { width: 39px; padding: 1px 0 0 1px; display: flex; flex-direction: column; gap: 11px; flex: none; }
.side .grip { margin: 0 3px -9px 4px; }
.side .group { flex-direction: column; width: 34px; }
.side .group.tight { margin-top: -8px; }
.side .group button { width: 34px; height: 35px; }
.brand { margin-top: auto; margin-bottom: 6px; display: flex; align-items: flex-end; gap: 1px; color: #a0a0a0; }
.brand b, .brand span { writing-mode: vertical-rl; transform: rotate(180deg); font: 16px/17px Lato, sans-serif; white-space: nowrap; }
.brand b { font-weight: 900; }

.center { flex: 1; min-width: 0; display: flex; flex-direction: column; }
.viewpanel { flex: 1; min-height: 0; display: flex; flex-direction: column; border-top: 1px solid #6a6a6a; border-left: 1px solid #5c5c5c; }
.panelmenu { display: flex; align-items: center; height: 24px; padding: 0 6px; flex: none; }
.panelmenu a { margin-right: 14px; }
.viewport { position: relative; flex: 1; min-height: 0; border: 1px solid #a8a8a8; overflow: hidden; }
.scene { display: block; width: 100%; height: 100%; }
.floor-line { stroke: #5b5b5b; }
.floor-axis { stroke: #404040; }
.gz { font: 10px "Liberation Sans", sans-serif; }
.gzx { fill: #d23434; } .gzy { fill: #3bd23b; } .gzz { fill: #3030d8; }
.tag { position: absolute; padding: 1px 2px; border-radius: 3px; background: #666; color: #dcdcdc; }
.view-name { left: 2px; top: 2px; }
.view-grid { right: 3px; bottom: 3px; background: #505050; }

.timeline { display: flex; gap: 3px; height: 22px; margin: 4px 0 5px; flex: none; }
.timeline .grip { margin: 4px 0 3px; }
.ruler { position: relative; flex: 1; margin-right: 3px; padding: 0 6px 0 5px; background: #323232; border: 1px solid; border-color: #2a2a2a #555 #555 #2a2a2a; border-radius: 2px; }
.marks, .ticks { display: flex; justify-content: space-between; }
.marks span { width: 0; display: flex; justify-content: center; height: 16px; line-height: 14px; }
.marks .first { justify-content: flex-start; padding-left: 5px; color: #57e08f; margin-right: -5px; }
.ticks { position: absolute; left: 5px; right: 6px; bottom: 0; height: 19px; align-items: flex-end; }
.ticks i { width: 1px; height: 1px; background: #999; }
.ticks .five { height: 2px; background: #ccc; }
.ticks .second { height: 19px; background: #6a6a6a; }
.playhead { position: absolute; left: 1px; top: 0; width: 9px; height: 17px; background: #57e08f; }
.transport { display: flex; align-items: center; gap: 3px; height: 27px; margin-bottom: 4px; flex: none; }
.transport .grip { margin: 3px 0; }
.range { flex: 1; display: flex; justify-content: space-between; height: 20px; margin: 0 3px; padding: 0 5px; border: 1px solid #303030; border-radius: 4px; color: #2c2c2c; background: linear-gradient(#808080, #5c5c5c); line-height: 17px; }
.tri { display: inline-block; border: 4px solid transparent; }
.tri.l { border-right: 7px solid #e8e8e8; border-left: 0; margin-right: 4px; }
.tri.r { border-left: 7px solid #e8e8e8; border-right: 0; margin-left: 4px; }
.playbtns { display: flex; gap: 11px; margin-left: 8px; }
.group.s button { width: 27px; height: 26px; }

.lower { display: flex; gap: 3px; height: 120px; margin-bottom: 2px; flex: none; }
.materials, .coords { border: 1px solid #333; border-top-color: #6a6a6a; border-left-color: #6a6a6a; }
.materials { flex: 1; min-width: 0; }
.viewpanel .panelmenu { height: 23px; }
.materials .panelmenu { height: 25px; border-bottom: 1px solid #6a6a6a; }
.coords { width: 299px; }
.chead { display: grid; grid-template-columns: 21px 93px 93px 1fr; align-items: center; height: 21px; margin: 0 2px; border-bottom: 1px solid #6a6a6a; }
.cgrid { display: grid; grid-template-columns: 10px 85px 9px 85px 11px 1fr; column-gap: 2px; row-gap: 2px; padding: 4px 3px 0 3px; align-items: center; }
.cgrid .num { width: 100%; }
.cgrid .drop, .cgrid .pill { width: 100%; margin-top: 3px; }
.status { display: flex; align-items: center; height: 21px; padding-left: 5px; border-top: 1px solid #6a6a6a; flex: none; }

.right { display: flex; flex-direction: column; padding-top: 2px; gap: 2px; min-height: 0; }
.dock { display: flex; min-height: 0; flex-basis: 0; }
.objects { flex-grow: 444; }
.attrs { flex-grow: 470; }
.panel { flex: 1; min-width: 0; display: flex; flex-direction: column; border: 1px solid #333; border-top-color: #6a6a6a; border-left-color: #6a6a6a; }
.light { background: #686868; height: 25px; border-bottom: 1px solid #333; }
.tools { margin: 0 -4px 0 auto; display: flex; gap: 2px; align-items: center; }
.objects .tools { gap: 3px; }
.eyes { width: 36px; height: 16px; margin-right: 6px; }
.arrow { margin-right: 7px; }
.find { margin-right: 5px; }
.tree { flex: 1; display: grid; grid-template-columns: 75px 38px 1fr; margin: 0 2px 0 0; border-right: 1px solid #6a6a6a; border-top: 1px solid #6a6a6a; }
.tree > div { border-right: 1px solid #333; }
.tree .tags { border-left: 1px solid #6a6a6a; border-right: 0; }
.row { height: 20px; background: #4f4f4f; display: flex; align-items: center; gap: 4px; padding-left: 2px; }
.flags .row { padding-left: 20px; gap: 3px; }
.flags i { width: 5px; height: 14px; flex: none; background: radial-gradient(circle at 50% 3px, #7c7c7c 2px, transparent 3px), radial-gradient(circle at 50% 11px, #7c7c7c 2px, transparent 3px); }
.check { width: 10px; height: 10px; flex: none; }
.tabs { width: 23px; display: flex; flex-direction: column; gap: 2px; align-items: flex-start; flex: none; }
.tabs button { width: 22px; padding: 6px 0; writing-mode: vertical-rl; text-orientation: sideways; line-height: 22px; color: #777; background: #333; border-radius: 0 4px 4px 0; }
.tabs .cur { color: #ffa31a; background: #686868; }

.attrs .panelmenu { height: 26px; border-bottom: 1px solid #6a6a6a; }
.abody { padding: 0 3px 0 2px; }
.aname { display: flex; align-items: center; gap: 6px; height: 26px; padding-left: 3px; }
.aname svg { width: 16px; height: 16px; }
.atabs { display: flex; width: max-content; gap: 1px; background: #2a2a2a; border: 1px solid #2a2a2a; border-radius: 4px; overflow: hidden; }
.atabs button { width: 29px; height: 18px; background: #666; color: #ccc; }
.atabs .sel { background: #8ea7d2; color: #000; }
.abody h2 { margin: 6px 0 4px; padding: 0 2px; font-size: 11px; line-height: 18px; font-weight: 400; color: #c4c4c4; background: #323232; }
.abody h2.second { margin: 4px 0; }
.rows { display: flex; flex-direction: column; gap: 2px; padding-left: 3px; }
.trow { display: flex; gap: 5px; }
.trow label { display: flex; align-items: center; width: 112px; }
.key { width: 13px; height: 13px; flex: none; margin-right: 4px; border: 2px solid #777; border-radius: 50%; background: radial-gradient(circle, #8a8a8a 3px, #333 4px); }
.trow .num { margin-left: auto; }
.order { display: flex; align-items: center; padding-left: 250px; height: 20px; margin-bottom: 3px; }
.order label { width: 30px; }
.order .drop { width: 66px; }
.fold { display: flex; align-items: center; gap: 4px; width: 100%; height: 18px; margin-bottom: 3px; padding-left: 12px; background: #6a6a6a; color: #d0d0d0; }
.fold i { border: 4px solid transparent; border-left: 4px solid #e0e0e0; border-right: 0; }
.prow { display: flex; align-items: center; min-height: 20px; }
.prow label { width: 71px; white-space: nowrap; }
.prow label span { margin-left: 2px; }
.prow .num { margin-right: 5px; }
.prow .drop { flex: 1; margin-right: 1px; }
.prow input[type=checkbox] { appearance: none; width: 12px; height: 12px; margin: 0; border: 1px solid #3a3a3a; border-radius: 3px; background: #6e6e6e; }
.abody hr { margin: 2px 0 3px; border: 0; border-top: 1px solid #333; border-bottom: 1px solid #6a6a6a; }
.fit { display: block; width: 78px; margin-left: 12px; }

.popup { position: absolute; left: 734px; top: 77px; width: 442px; height: 300px; background: #464646; border: 1px solid #282828; border-radius: 3px; padding: 2px; }
.popup .grip { display: block; margin: 0 4px; }
.cols { display: grid; grid-template-columns: repeat(4, 109px); align-items: start; }
.cols ul { list-style: none; margin: 0; padding: 0; background: linear-gradient(90deg, #606060 36px, transparent 36px); }
.cols li { display: flex; align-items: center; gap: 5px; height: 36px; white-space: nowrap; }
.cols svg { width: 36px; height: 36px; }
.callout { position: absolute; left: 735px; top: 83px; width: 106px; height: 41px; border: 2px solid #ee1c24; }
.pointer { position: absolute; left: 689px; top: 134px; width: 44px; height: 96px; }
.badge { position: absolute; right: 166px; bottom: 93px; width: 50px; height: 50px; }
.badge text { font: 700 6px "Noto Sans CJK SC", sans-serif; fill: #111; }
```
FILE: script.js
```javascript
(function () {
  var ns = 'http://www.w3.org/2000/svg';
  var floor = document.getElementById('floor');
  var horizon = 380.5, vanishX = 562.4, far = 394, near = 771;

  function line(x1, y1, x2, y2, cls, alpha) {
    var l = document.createElementNS(ns, 'line');
    l.setAttribute('x1', x1); l.setAttribute('y1', y1);
    l.setAttribute('x2', x2); l.setAttribute('y2', y2);
    l.setAttribute('class', cls);
    l.setAttribute('opacity', alpha);
    floor.appendChild(l);
  }

  for (var n = 2; n < 44; n++) {
    var y = Math.floor(horizon + 592 / n) + 0.5;
    line(42, y, 1076, y, n % 10 === 9 ? 'floor-axis' : 'floor-line', n > 24 ? 0.5 : 1);
  }
  for (var k = -40; k <= 40; k++) {
    var slope = -0.0606 + 1.733 * k;
    line(vanishX + slope * (far - horizon), far, vanishX + slope * (near - horizon), near,
      k % 10 === 0 ? 'floor-axis' : 'floor-line', Math.abs(k) > 12 ? 0.6 : 1);
  }

  var ticks = document.getElementById('ticks');
  for (var f = 0; f <= 90; f++) {
    var t = document.createElement('i');
    if (f % 30 === 0 && f) t.className = 'second';
    else if (f % 5 === 0) t.className = 'five';
    ticks.appendChild(t);
  }
})();
```
